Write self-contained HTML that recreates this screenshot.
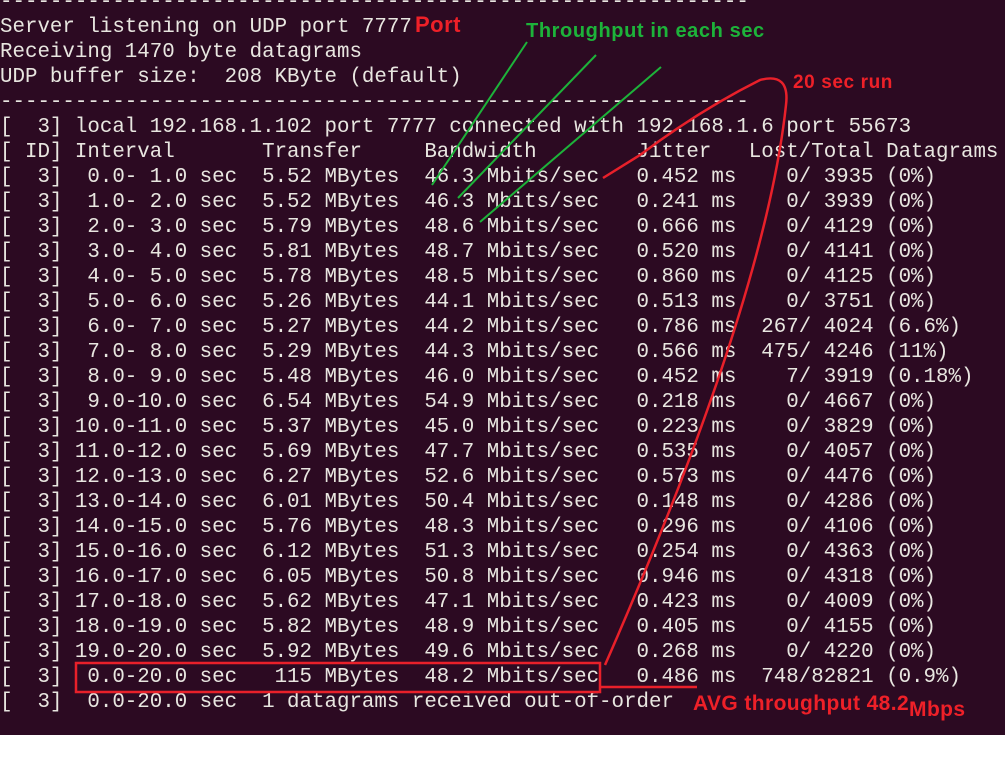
<!DOCTYPE html>
<html><head><meta charset="utf-8"><style>
html,body{margin:0;padding:0;width:1005px;height:777px;overflow:hidden;background:#fff;}
#term{position:absolute;left:0;top:0;width:1005px;height:735px;background:#2c0a22;overflow:hidden;}
pre{position:absolute;left:0;top:-10px;margin:0;font-family:"Liberation Mono",monospace;font-size:20.8px;line-height:25px;color:#e8e6e0;}
.a{position:absolute;font-family:"Liberation Sans",sans-serif;font-weight:bold;white-space:nowrap;}
svg{position:absolute;left:0;top:0;}
</style></head><body>
<div id="term">
<pre>------------------------------------------------------------
Server listening on UDP port 7777
Receiving 1470 byte datagrams
UDP buffer size:  208 KByte (default)
------------------------------------------------------------
[  3] local 192.168.1.102 port 7777 connected with 192.168.1.6 port 55673
[ ID] Interval       Transfer     Bandwidth        Jitter   Lost/Total Datagrams
[  3]  0.0- 1.0 sec  5.52 MBytes  46.3 Mbits/sec   0.452 ms    0/ 3935 (0%)
[  3]  1.0- 2.0 sec  5.52 MBytes  46.3 Mbits/sec   0.241 ms    0/ 3939 (0%)
[  3]  2.0- 3.0 sec  5.79 MBytes  48.6 Mbits/sec   0.666 ms    0/ 4129 (0%)
[  3]  3.0- 4.0 sec  5.81 MBytes  48.7 Mbits/sec   0.520 ms    0/ 4141 (0%)
[  3]  4.0- 5.0 sec  5.78 MBytes  48.5 Mbits/sec   0.860 ms    0/ 4125 (0%)
[  3]  5.0- 6.0 sec  5.26 MBytes  44.1 Mbits/sec   0.513 ms    0/ 3751 (0%)
[  3]  6.0- 7.0 sec  5.27 MBytes  44.2 Mbits/sec   0.786 ms  267/ 4024 (6.6%)
[  3]  7.0- 8.0 sec  5.29 MBytes  44.3 Mbits/sec   0.566 ms  475/ 4246 (11%)
[  3]  8.0- 9.0 sec  5.48 MBytes  46.0 Mbits/sec   0.452 ms    7/ 3919 (0.18%)
[  3]  9.0-10.0 sec  6.54 MBytes  54.9 Mbits/sec   0.218 ms    0/ 4667 (0%)
[  3] 10.0-11.0 sec  5.37 MBytes  45.0 Mbits/sec   0.223 ms    0/ 3829 (0%)
[  3] 11.0-12.0 sec  5.69 MBytes  47.7 Mbits/sec   0.535 ms    0/ 4057 (0%)
[  3] 12.0-13.0 sec  6.27 MBytes  52.6 Mbits/sec   0.573 ms    0/ 4476 (0%)
[  3] 13.0-14.0 sec  6.01 MBytes  50.4 Mbits/sec   0.148 ms    0/ 4286 (0%)
[  3] 14.0-15.0 sec  5.76 MBytes  48.3 Mbits/sec   0.296 ms    0/ 4106 (0%)
[  3] 15.0-16.0 sec  6.12 MBytes  51.3 Mbits/sec   0.254 ms    0/ 4363 (0%)
[  3] 16.0-17.0 sec  6.05 MBytes  50.8 Mbits/sec   0.946 ms    0/ 4318 (0%)
[  3] 17.0-18.0 sec  5.62 MBytes  47.1 Mbits/sec   0.423 ms    0/ 4009 (0%)
[  3] 18.0-19.0 sec  5.82 MBytes  48.9 Mbits/sec   0.405 ms    0/ 4155 (0%)
[  3] 19.0-20.0 sec  5.92 MBytes  49.6 Mbits/sec   0.268 ms    0/ 4220 (0%)
[  3]  0.0-20.0 sec   115 MBytes  48.2 Mbits/sec   0.486 ms  748/82821 (0.9%)
[  3]  0.0-20.0 sec  1 datagrams received out-of-order</pre>
<svg width="1005" height="735">
<g stroke="#1db33a" stroke-width="2" fill="none">
<line x1="527" y1="42" x2="432" y2="185"/>
<line x1="596" y1="55" x2="458" y2="198"/>
<line x1="661" y1="67" x2="480" y2="222"/>
</g>
<g stroke="#e8202a" stroke-width="2.5" fill="none">
<path d="M603,178 L640,155 Q700,110 760,80 Q790,72 786,105 Q765,300 605,665"/>
<rect x="76" y="663" width="524" height="29"/>
<line x1="600" y1="687" x2="697" y2="687"/>
</g>
</svg>
<div class="a" style="left:415px;top:12px;font-size:22px;letter-spacing:0.5px;color:#ee2028;">Port</div>
<div class="a" style="left:526px;top:20px;font-size:20px;letter-spacing:0.6px;color:#1db33a;">Throughput in each sec</div>
<div class="a" style="left:793px;top:72px;font-size:19px;letter-spacing:0.6px;color:#ee2028;">20 sec run</div>
<div class="a" style="left:693px;top:692px;font-size:21px;letter-spacing:0.4px;color:#ee2028;">AVG throughput 48.2<span style="position:relative;top:6px">Mbps</span></div>
</div>
</body></html>
